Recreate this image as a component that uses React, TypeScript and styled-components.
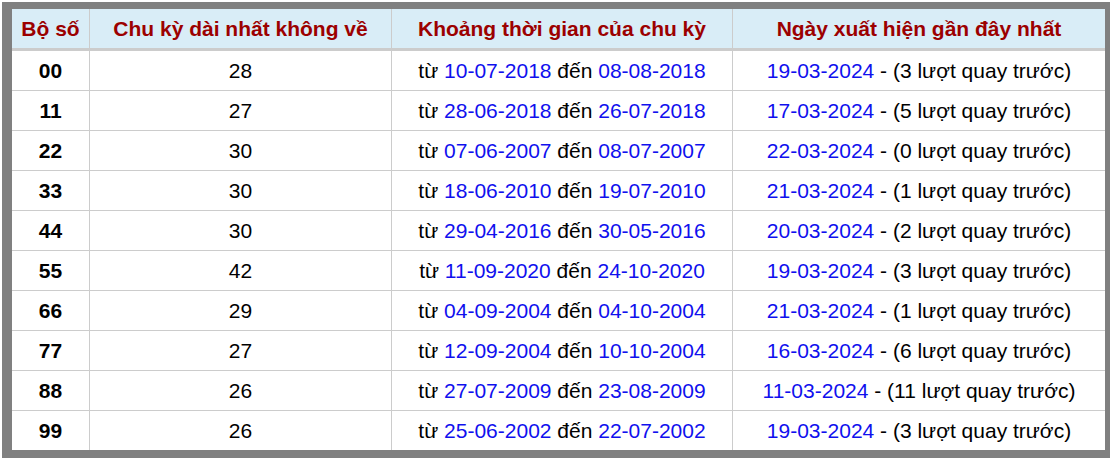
import styled, { createGlobalStyle } from 'styled-components';

const GlobalStyle = createGlobalStyle`
    html, body {
        margin: 0;
        padding: 0;
        background: #ffffff;
    }
    body {
        font-family: 'Liberation Sans', Arial, sans-serif;
    }
`;

const Page = styled.div`
    width: 1110px;
    height: 458px;
    padding: 2px 0 0 2px;
    box-sizing: border-box;
    overflow: hidden;
`;

const Frame = styled.div`
    width: 1108px;
    background: #808080;
    padding: 7px 8px 8px 10px;
    box-sizing: border-box;
`;

const Table = styled.table`
    width: 1090px;
    border-collapse: collapse;
    table-layout: fixed;
    background: #ffffff;
`;

const HeadCell = styled.th<{ $w: number }>`
    width: ${(p) => p.$w}px;
    height: 39px;
    padding: 0;
    background: #d9edf7;
    color: #9c0000;
    font-size: 21px;
    font-weight: bold;
    text-align: center;
    vertical-align: middle;
    white-space: nowrap;
    border-bottom: 3px solid #cccccc;
    & + & {
        border-left: 1px solid #cccccc;
    }
`;

const Row = styled.tr`
    & + & td {
        border-top: 1px solid #cccccc;
    }
`;

const Cell = styled.td<{ $bold?: boolean }>`
    height: 39px;
    padding: 0;
    font-size: 21px;
    font-weight: ${(p) => (p.$bold ? 'bold' : 'normal')};
    color: #000000;
    text-align: center;
    vertical-align: middle;
    white-space: nowrap;
    & + & {
        border-left: 1px solid #cccccc;
    }
`;

const DateText = styled.span`
    color: #1010ee;
`;

type Item = {
    pair: string;
    cycle: number;
    from: string;
    to: string;
    last: string;
    ago: number;
};

const rows: Item[] = [
    { pair: '00', cycle: 28, from: '10-07-2018', to: '08-08-2018', last: '19-03-2024', ago: 3 },
    { pair: '11', cycle: 27, from: '28-06-2018', to: '26-07-2018', last: '17-03-2024', ago: 5 },
    { pair: '22', cycle: 30, from: '07-06-2007', to: '08-07-2007', last: '22-03-2024', ago: 0 },
    { pair: '33', cycle: 30, from: '18-06-2010', to: '19-07-2010', last: '21-03-2024', ago: 1 },
    { pair: '44', cycle: 30, from: '29-04-2016', to: '30-05-2016', last: '20-03-2024', ago: 2 },
    { pair: '55', cycle: 42, from: '11-09-2020', to: '24-10-2020', last: '19-03-2024', ago: 3 },
    { pair: '66', cycle: 29, from: '04-09-2004', to: '04-10-2004', last: '21-03-2024', ago: 1 },
    { pair: '77', cycle: 27, from: '12-09-2004', to: '10-10-2004', last: '16-03-2024', ago: 6 },
    { pair: '88', cycle: 26, from: '27-07-2009', to: '23-08-2009', last: '11-03-2024', ago: 11 },
    { pair: '99', cycle: 26, from: '25-06-2002', to: '22-07-2002', last: '19-03-2024', ago: 3 },
];

const App = () => {
    return (
        <Page>
            <GlobalStyle />
            <Frame>
                <Table>
                    <thead>
                        <tr>
                            <HeadCell $w={77}>Bộ số</HeadCell>
                            <HeadCell $w={301}>Chu kỳ dài nhất không về</HeadCell>
                            <HeadCell $w={340}>Khoảng thời gian của chu kỳ</HeadCell>
                            <HeadCell $w={372}>Ngày xuất hiện gần đây nhất</HeadCell>
                        </tr>
                    </thead>
                    <tbody>
                        {rows.map((r) => (
                            <Row key={r.pair}>
                                <Cell $bold>{r.pair}</Cell>
                                <Cell>{r.cycle}</Cell>
                                <Cell>
                                    từ <DateText>{r.from}</DateText> đến{' '}
                                    <DateText>{r.to}</DateText>
                                </Cell>
                                <Cell>
                                    <DateText>{r.last}</DateText> - ({r.ago} lượt
                                    quay trước)
                                </Cell>
                            </Row>
                        ))}
                    </tbody>
                </Table>
            </Frame>
        </Page>
    );
};

export default App;
